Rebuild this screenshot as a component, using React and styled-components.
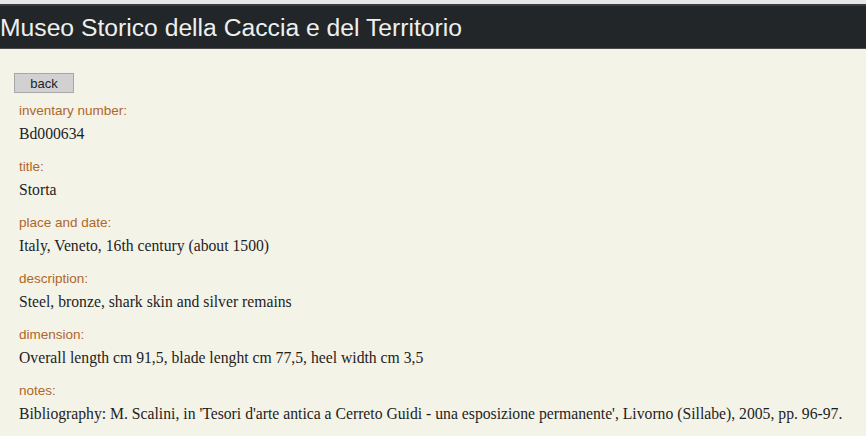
import styled, { createGlobalStyle } from "styled-components";

const GlobalStyle = createGlobalStyle`
  body {
    margin: 0;
    background-color: #f4f3e8;
  }
`;

const Page = styled.div`
  min-height: 436px;
  background-color: #f4f3e8;
  border-top: 4px solid #e6e6e6;
`;

const Header = styled.div`
  height: 45px;
  display: flex;
  align-items: center;
  padding-top: 2px;
  box-sizing: border-box;
  background-color: #222628;
  border-top: 2px solid #3a3d3e;
  border-bottom: 1px solid #4a4d4c;

  h1 {
    margin: 0;
    font-family: "Liberation Sans", Arial, sans-serif;
    font-weight: normal;
    font-size: 24.7px;
    color: #eef0ee;
  }
`;

const Content = styled.div`
  padding: 24px 14px 0 14px;
`;

const BackButton = styled.button`
  width: 60px;
  height: 20px;
  padding: 0;
  border: 1px solid #a8a8a8;
  background-color: #d1d1d1;
  font-family: "Liberation Sans", Arial, sans-serif;
  font-size: 13px;
  color: #222;
  margin-bottom: 10px;
`;

const Field = styled.div`
  padding-left: 5px;
  margin-bottom: 15px;
`;

const Label = styled.div`
  font-family: "Liberation Sans", Arial, sans-serif;
  font-size: 13.5px;
  line-height: 16px;
  color: #b0662a;
  margin-bottom: 5px;
`;

const Value = styled.div`
  font-family: "Liberation Serif", "Times New Roman", serif;
  font-size: 15.7px;
  line-height: 20px;
  color: #1e1e1e;
  white-space: nowrap;
  font-variant-numeric: oldstyle-nums;
`;

const fields = [
  { label: "inventary number:", value: "Bd000634" },
  { label: "title:", value: "Storta" },
  { label: "place and date:", value: "Italy, Veneto, 16th century (about 1500)" },
  { label: "description:", value: "Steel, bronze, shark skin and silver remains" },
  { label: "dimension:", value: "Overall length cm 91,5, blade lenght cm 77,5, heel width cm 3,5" },
  {
    label: "notes:",
    value:
      "Bibliography: M. Scalini, in 'Tesori d'arte antica a Cerreto Guidi - una esposizione permanente', Livorno (Sillabe), 2005, pp. 96-97.",
  },
];

function App() {
  return (
    <>
      <GlobalStyle />
      <Page>
        <Header>
          <h1>Museo Storico della Caccia e del Territorio</h1>
        </Header>
        <Content>
          <BackButton>back</BackButton>
          {fields.map((f) => (
            <Field key={f.label}>
              <Label>{f.label}</Label>
              <Value>{f.value}</Value>
            </Field>
          ))}
        </Content>
      </Page>
    </>
  );
}

export default App;
